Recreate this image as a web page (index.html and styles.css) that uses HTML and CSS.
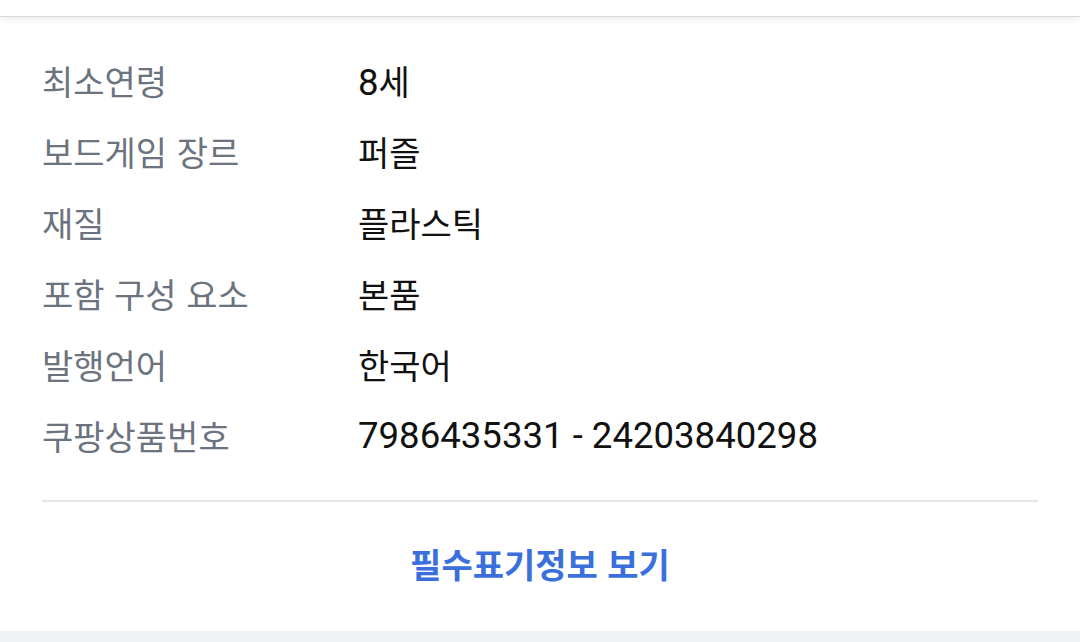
FILE: index.html
```html
<!DOCTYPE html>
<html lang="ko">
<head>
  <meta charset="UTF-8" />
  <meta name="viewport" content="width=device-width, initial-scale=1.0" />
  <title>상품 정보</title>
  <link rel="stylesheet" href="styles.css">
</head>
<body>
  <div class="prev"></div>
  <div class="card">
    <div class="spec">
      <div class="row"><span class="label">최소연령</span><span class="value"><span class="num">8</span>세</span></div>
      <div class="row"><span class="label">보드게임 장르</span><span class="value">퍼즐</span></div>
      <div class="row"><span class="label">재질</span><span class="value">플라스틱</span></div>
      <div class="row"><span class="label">포함 구성 요소</span><span class="value">본품</span></div>
      <div class="row"><span class="label">발행언어</span><span class="value">한국어</span></div>
      <div class="row"><span class="label">쿠팡상품번호</span><span class="value num">7986435331 - 24203840298</span></div>
    </div>
    <div class="more"><a href="#">필수표기정보 보기</a></div>
  </div>
  <div class="gap"></div>
</body>
</html>
```

FILE: styles.css
```css
body {
  margin: 0;
  padding: 0;
  background: #ffffff;
  font-family: Roboto, "Noto Sans CJK KR", sans-serif;
  overflow: hidden;
}
.prev {
  position: relative;
  z-index: 1;
  height: 16px;
  background: #ffffff;
  border-bottom: 1px solid #d9d9d9;
  box-shadow: 0 3px 6px rgba(0, 0, 0, 0.07);
}
.card {
  padding: 0 42px;
  background: #ffffff;
}
.spec {
  padding: 28px 0 29px;
  border-bottom: 2px solid #e6e6e6;
}
.row {
  display: flex;
  align-items: center;
  height: 71px;
  font-size: 34px;
}
.label {
  width: 316px;
  flex-shrink: 0;
  color: #6b737e;
  font-family: "Noto Sans CJK KR", sans-serif;
}
.value {
  color: #111111;
  font-family: "Noto Sans CJK KR", sans-serif;
}
.num {
  font-family: Roboto, sans-serif;
  font-size: 36.6px;
}
.more {
  display: flex;
  align-items: center;
  justify-content: center;
  height: 129px;
  padding-bottom: 6px;
  box-sizing: border-box;
}
.more a {
  color: #3a6fdc;
  font-family: "Noto Sans CJK KR", sans-serif;
  font-weight: 700;
  font-size: 34px;
  text-decoration: none;
}
.gap {
  height: 20px;
  background: #f1f2f5;
}
```
